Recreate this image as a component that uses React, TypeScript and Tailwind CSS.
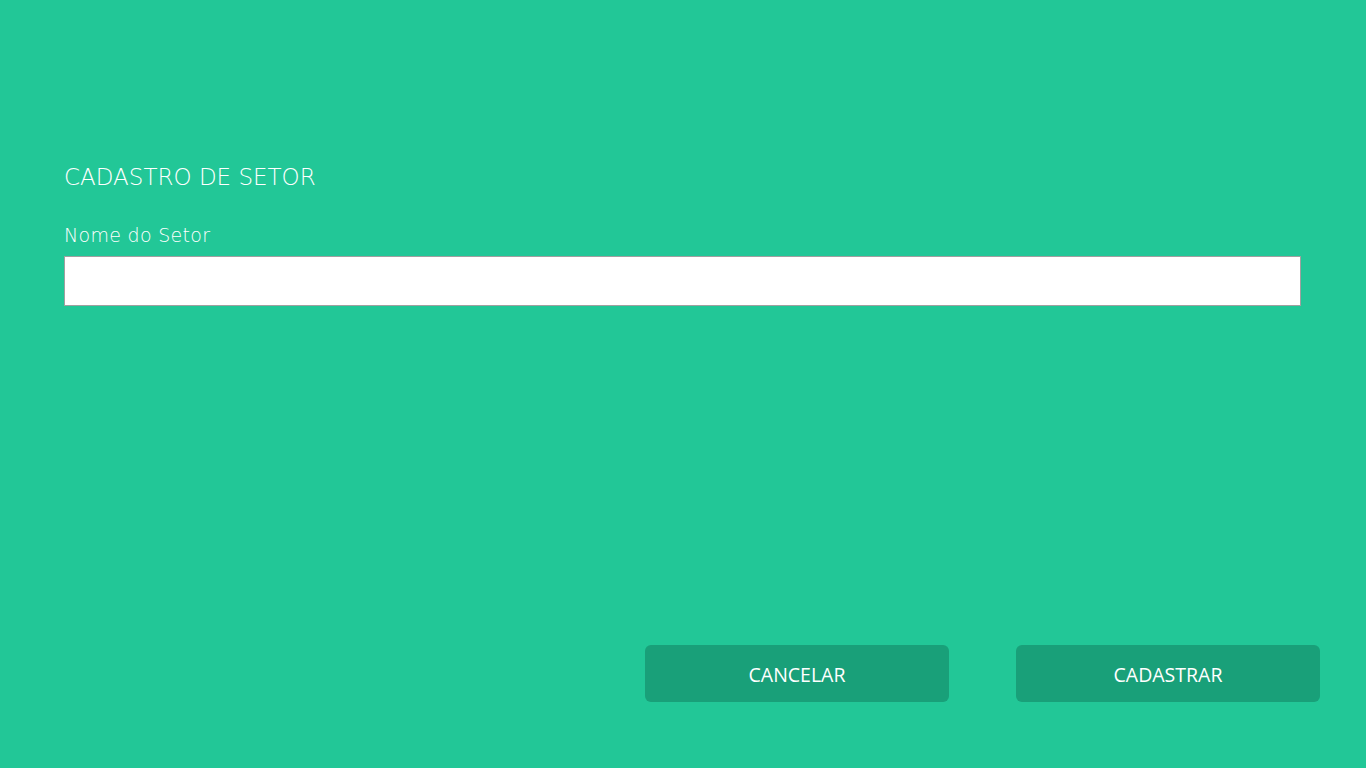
export default function App() {
  return (
    <div className="flex flex-col h-screen bg-[#22c797] text-white font-['DejaVu_Sans',sans-serif]">
      <div className="pl-[64px] pr-[65px] pt-[161px]">
        <h1 className="text-[23px] font-light leading-[32px]">CADASTRO DE SETOR</h1>
        <label className="block mt-[29px] text-[19px] font-light leading-[26px] tracking-[0.3px]">Nome do Setor</label>
        <input className="mt-[8px] w-full h-[50px] bg-white border border-[#a0a0a0] outline-none text-black px-2" />
      </div>
      <div className="flex-1" />
      <div className="flex justify-end gap-[67px] pr-[46px] pb-[66px] font-['Open_Sans',sans-serif]">
        <button className="w-[304px] h-[57px] rounded-[6px] bg-[#19a079] text-[19.5px] pt-[3px]">CANCELAR</button>
        <button className="w-[304px] h-[57px] rounded-[6px] bg-[#19a079] text-[19.5px] pt-[3px]">CADASTRAR</button>
      </div>
    </div>
  );
}
